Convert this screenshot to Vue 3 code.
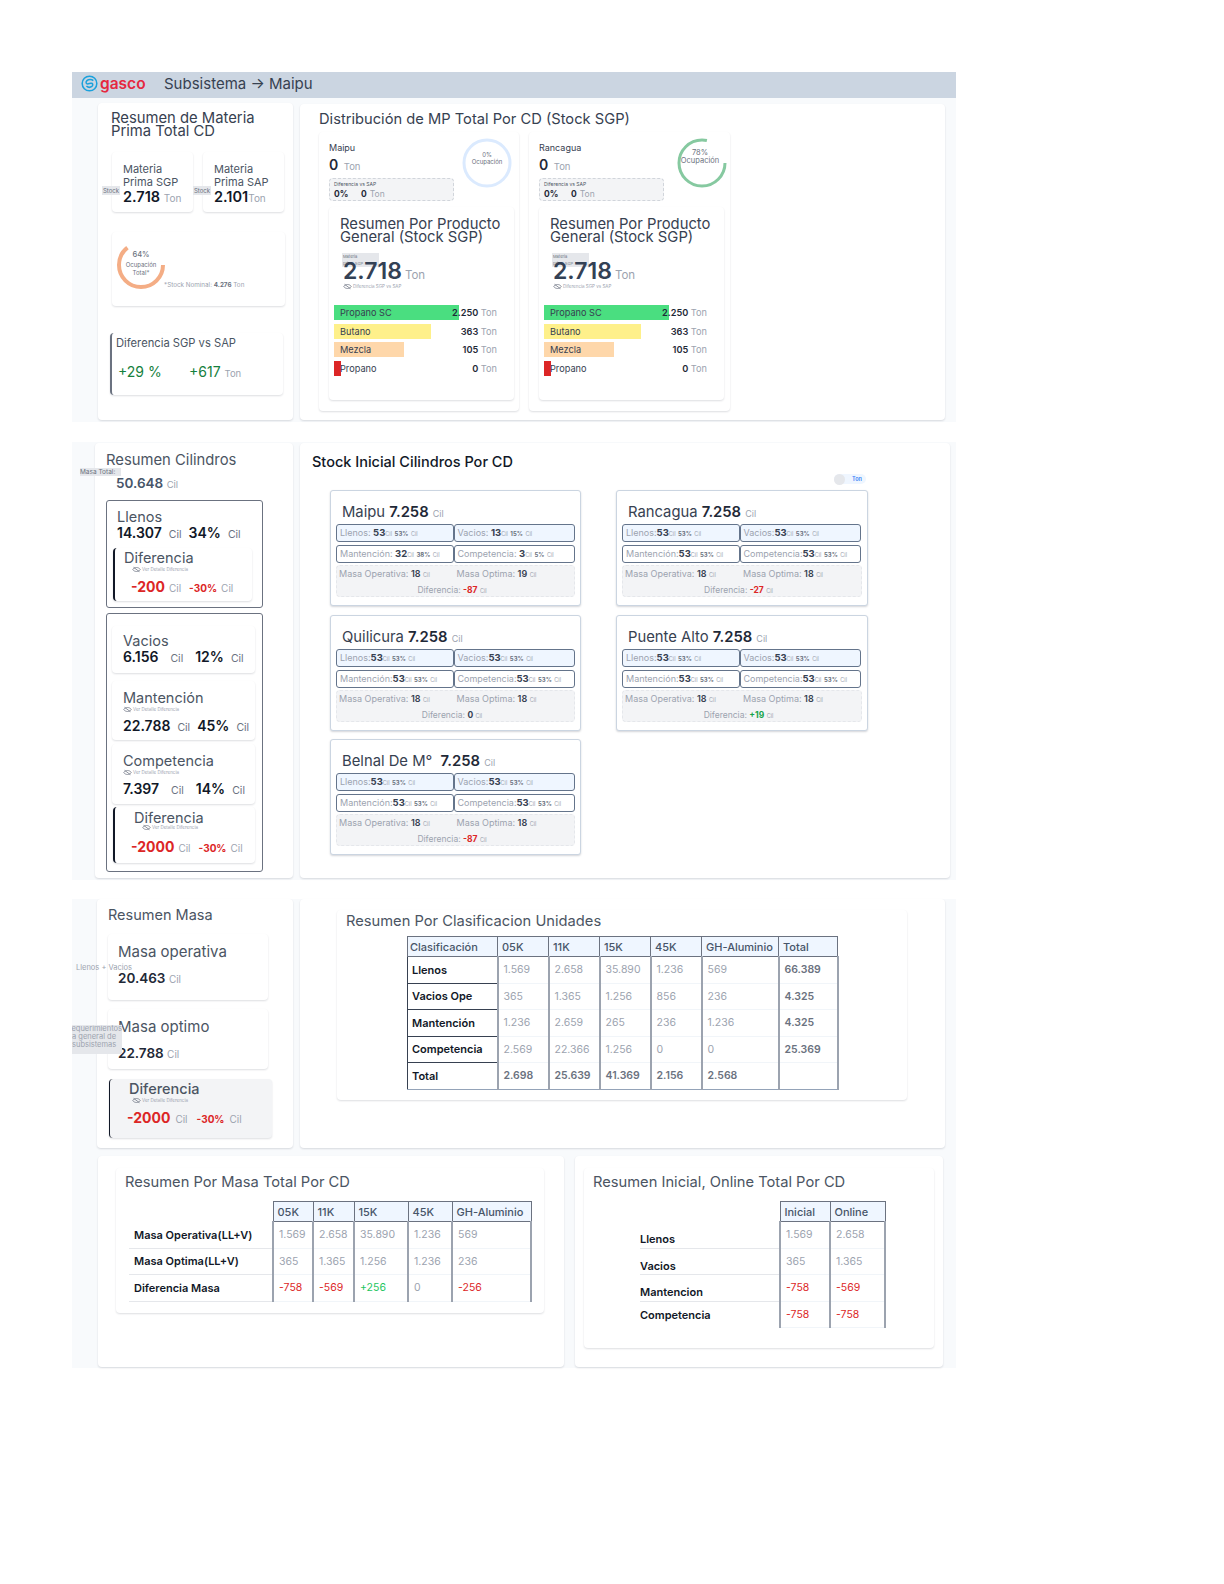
<script setup>
const products = [
  { name: 'Propano SC', value: '2.250', width: 125, color: '#4ade80' },
  { name: 'Butano', value: '363', width: 97, color: '#fef08a' },
  { name: 'Mezcla', value: '105', width: 70, color: '#fed7aa' },
  { name: 'Propano', value: '0', width: 7, color: '#dc2626' }
]
const centers = [
  { name: 'Maipu', pct: 0, wide: false, color: '#dbeafe' },
  { name: 'Rancagua', pct: 78, wide: true, color: '#86c9a0' }
]
const gaugeLen = 2 * Math.PI * 22
const stock = [
  { name: 'Maipu', cells: [['Llenos: ', '53', '53%'], ['Vacios: ', '13', '15%'], ['Mantención: ', '32', '38%'], ['Competencia: ', '3', '5%']], op: '18', opt: '19', dif: '-87', tone: 'neg' },
  { name: 'Rancagua', cells: [['Llenos:', '53', '53%'], ['Vacios:', '53', '53%'], ['Mantención:', '53', '53%'], ['Competencia:', '53', '53%']], op: '18', opt: '18', dif: '-27', tone: 'neg' },
  { name: 'Quilicura', cells: [['Llenos:', '53', '53%'], ['Vacios:', '53', '53%'], ['Mantención:', '53', '53%'], ['Competencia:', '53', '53%']], op: '18', opt: '18', dif: '0', tone: 'zero' },
  { name: 'Puente Alto', cells: [['Llenos:', '53', '53%'], ['Vacios:', '53', '53%'], ['Mantención:', '53', '53%'], ['Competencia:', '53', '53%']], op: '18', opt: '18', dif: '+19', tone: 'pos' },
  { name: 'Belnal De M° ', cells: [['Llenos:', '53', '53%'], ['Vacios:', '53', '53%'], ['Mantención:', '53', '53%'], ['Competencia:', '53', '53%']], op: '18', opt: '18', dif: '-87', tone: 'neg' }
]
const t1Cols = [90, 51, 51, 51, 51, 77, 59]
const t1Head = ['Clasificación', '05K', '11K', '15K', '45K', 'GH-Aluminio', 'Total']
const t1Rows = [
  ['Llenos', '1.569', '2.658', '35.890', '1.236', '569', '66.389'],
  ['Vacios Ope', '365', '1.365', '1.256', '856', '236', '4.325'],
  ['Mantención', '1.236', '2.659', '265', '236', '1.236', '4.325'],
  ['Competencia', '2.569', '22.366', '1.256', '0', '0', '25.369'],
  ['Total', '2.698', '25.639', '41.369', '2.156', '2.568', '']
]
const t2Cols = [144, 40, 41, 54, 44, 79]
const t2Head = ['05K', '11K', '15K', '45K', 'GH-Aluminio']
const t2Rows = [
  ['Masa Operativa(LL+V)', '1.569', '2.658', '35.890', '1.236', '569'],
  ['Masa Optima(LL+V)', '365', '1.365', '1.256', '1.236', '236'],
  ['Diferencia Masa', '-758', '-569', '+256', '0', '-256']
]
const t3Cols = [140, 50, 55]
const t3Rows = [
  ['Llenos', '1.569', '2.658'],
  ['Vacios', '365', '1.365'],
  ['Mantencion', '-758', '-569'],
  ['Competencia', '-758', '-758']
]
const toneOf = (v) => (v.startsWith('-') ? 'neg' : v.startsWith('+') ? 'pos' : '')
</script>

<template>
  <div class="page">
    <header class="topbar">
      <svg class="logo" viewBox="0 0 20 20" width="17" height="17" fill="none" stroke="#1ba1dc" stroke-width="1.8">
        <circle cx="10" cy="10" r="8.6" />
        <path d="M14.5 6.6C12.6 4.8 9 4.6 7 6.6 5 8.6 6 11 8.6 10.4l3-.6c2.4-.4 3 2 1.2 3.6-1.8 1.4-4.6 1.2-6.4-.4" />
      </svg>
      <span class="brand">gasco</span>
      <span class="crumb">Subsistema → Maipu</span>
    </header>

    <section class="band band-one">
      <div class="card mp-total">
        <h2 class="title tight">Resumen de Materia Prima Total CD</h2>
        <div class="mp-pair">
          <div class="card mp-mini">
            <div class="mp-label">Materia Prima SGP</div>
            <div class="mp-val">2.718 <small>Ton</small></div>
            <span class="tip stock-tip">Stock</span>
          </div>
          <div class="card mp-mini">
            <div class="mp-label">Materia Prima SAP</div>
            <div class="mp-val">2.101<small>Ton</small></div>
            <span class="tip stock-tip">Stock</span>
          </div>
        </div>
        <div class="card occ">
          <div class="occ-gauge">
            <svg viewBox="0 0 50 50" width="50" height="50" fill="none">
              <circle cx="25" cy="25" r="22" stroke="#f4ad85" stroke-width="4" :stroke-dasharray="`${gaugeLen * 0.64} ${gaugeLen}`" />
            </svg>
            <div class="occ-text"><b>64%</b><span>Ocupación Total*</span></div>
          </div>
          <span class="occ-note">*Stock Nominal: <b>4.276</b> Ton</span>
        </div>
        <div class="card sgp-diff">
          <div class="sgp-title">Diferencia SGP vs SAP</div>
          <div class="sgp-vals"><span>+29 %</span><span>+617 <small>Ton</small></span></div>
        </div>
      </div>

      <div class="card dist">
        <h2 class="title dist-title">Distribución de MP Total Por CD (Stock SGP)</h2>
        <div class="dist-row">
          <div v-for="c in centers" :key="c.name" class="card center">
            <div class="center-head" :class="{ wide: c.wide }">
              <div class="center-info">
                <div class="center-name">{{ c.name }}</div>
                <div class="center-val">0 <small>Ton</small></div>
                <div class="center-diff">
                  <div>Diferencia vs SAP</div>
                  <p><b>0%</b><b>0</b> <small>Ton</small></p>
                </div>
              </div>
              <div class="center-gauge">
                <svg viewBox="0 0 50 50" width="50" height="50" fill="none">
                  <circle cx="25" cy="25" r="23" stroke="#dbeafe" stroke-width="3" v-if="c.pct === 0" />
                  <circle cx="25" cy="25" r="23" :stroke="c.color" stroke-width="3" v-else :stroke-dasharray="`${2 * Math.PI * 23 * c.pct / 100} 200`" />
                </svg>
                <div class="center-gauge-text">{{ c.pct }}%<br />Ocupación</div>
              </div>
            </div>
            <div class="card product">
              <h3 class="title tight">Resumen Por Producto General (Stock SGP)</h3>
              <div class="big-wrap">
                <span class="tip big-tip">Materia<br />prima SGP</span>
                <div class="big">2.718<small>Ton</small></div>
                <div class="eye-line">
                  <svg viewBox="0 0 12 8" width="9" height="7" fill="none" stroke="#6b7280" stroke-width="1"><path d="M1 4c2-3.500 8-3.500 10 0-2 3.500-8 3.500-10 0zM2 1l8 6" /></svg>
                  Diferencia SGP vs SAP
                </div>
              </div>
              <div class="bars">
                <div v-for="p in products" :key="p.name" class="bar-row">
                  <span class="bar-fill" :style="{ width: p.width + 'px', background: p.color }"></span>
                  <span class="bar-name">{{ p.name }}</span>
                  <span class="bar-val"><b>{{ p.value }}</b> <small>Ton</small></span>
                </div>
              </div>
            </div>
          </div>
        </div>
      </div>
    </section>

    <section class="band band-two">
      <div class="card cyl">
        <h2 class="cyl-title">Resumen Cilindros</h2>
        <div class="cyl-total">
          <span class="tip total-tip">Masa Total:</span>
          50.648 <small>Cil</small>
        </div>
        <div class="group llenos">
          <div class="g-name">Llenos</div>
          <div class="g-line"><b>14.307</b><small>Cil</small><b>34%</b><small>Cil</small></div>
          <div class="card diff-box one">
            <div class="g-name">Diferencia</div>
            <div class="eye-line ind"><svg viewBox="0 0 12 8" width="9" height="7" fill="none" stroke="#6b7280" stroke-width="1"><path d="M1 4c2-3.500 8-3.500 10 0-2 3.500-8 3.500-10 0zM2 1l8 6" /></svg>Ver Detalle Diferencia</div>
            <div class="neg-line"><b>-200</b><small>Cil</small><b class="pct">-30%</b><small>Cil</small></div>
          </div>
        </div>
        <div class="group rest">
          <div class="card sub vacios">
            <div class="g-name">Vacios</div>
            <div class="g-line"><b>6.156</b><small class="wide-gap">Cil</small><b>12%</b><small>Cil</small></div>
          </div>
          <div class="card sub mant">
            <div class="g-name">Mantención</div>
            <div class="eye-line"><svg viewBox="0 0 12 8" width="9" height="7" fill="none" stroke="#6b7280" stroke-width="1"><path d="M1 4c2-3.500 8-3.500 10 0-2 3.500-8 3.500-10 0zM2 1l8 6" /></svg>Ver Detalle Diferencia</div>
            <div class="g-line"><b>22.788</b><small>Cil</small><b>45%</b><small>Cil</small></div>
          </div>
          <div class="card sub comp">
            <div class="g-name">Competencia</div>
            <div class="eye-line"><svg viewBox="0 0 12 8" width="9" height="7" fill="none" stroke="#6b7280" stroke-width="1"><path d="M1 4c2-3.500 8-3.500 10 0-2 3.500-8 3.500-10 0zM2 1l8 6" /></svg>Ver Detalle Diferencia</div>
            <div class="g-line"><b>7.397</b><small class="wide-gap">Cil</small><b>14%</b><small>Cil</small></div>
          </div>
          <div class="card diff-box two">
            <div class="g-name">Diferencia</div>
            <div class="eye-line ind"><svg viewBox="0 0 12 8" width="9" height="7" fill="none" stroke="#6b7280" stroke-width="1"><path d="M1 4c2-3.500 8-3.500 10 0-2 3.500-8 3.500-10 0zM2 1l8 6" /></svg>Ver Detalle Diferencia</div>
            <div class="neg-line"><b class="large">-2000</b><small>Cil</small><b class="pct">-30%</b><small>Cil</small></div>
          </div>
        </div>
      </div>

      <div class="card stock">
        <h2 class="stock-title">Stock Inicial Cilindros Por CD</h2>
        <div class="toggle"><i></i><span>Ton</span></div>
        <div class="stock-grid">
          <div v-for="s in stock" :key="s.name" class="stock-card">
            <div class="stock-name">{{ s.name }} <b>7.258</b> <small>Cil</small></div>
            <div class="stock-cells">
              <div v-for="(c, i) in s.cells" :key="c[0]" class="cell" :class="{ blue: i < 2 }">
                {{ c[0] }}<b>{{ c[1] }}</b><small>Cil</small> <b class="cell-pct">{{ c[2] }}</b> <small>Cil</small>
              </div>
            </div>
            <div class="mass">
              <div class="mass-row">
                <span>Masa Operativa: <b>{{ s.op }}</b> <small>Cil</small></span>
                <span>Masa Optima: <b>{{ s.opt }}</b> <small>Cil</small></span>
              </div>
              <div class="mass-dif">Diferencia: <b :class="s.tone">{{ s.dif }}</b> <small>Cil</small></div>
            </div>
          </div>
        </div>
      </div>
    </section>

    <section class="band band-three">
      <div class="three-top">
        <div class="card masa">
          <h2 class="masa-title">Resumen Masa</h2>
          <div class="card masa-card op">
            <div class="masa-name">Masa operativa</div>
            <span class="tip-plain">Llenos + Vacios</span>
            <div class="masa-val">20.463 <small>Cil</small></div>
          </div>
          <div class="card masa-card opt">
            <div class="masa-name">Masa optimo</div>
            <span class="tip req-tip">Requerimientos<br />a general de<br />subsistemas</span>
            <div class="masa-val">22.788 <small>Cil</small></div>
          </div>
          <div class="masa-diff">
            <div class="g-name">Diferencia</div>
            <div class="eye-line"><svg viewBox="0 0 12 8" width="9" height="7" fill="none" stroke="#6b7280" stroke-width="1"><path d="M1 4c2-3.500 8-3.500 10 0-2 3.500-8 3.500-10 0zM2 1l8 6" /></svg>Ver Detalle Diferencia</div>
            <div class="neg-line"><b>-2000</b><small>Cil</small><b class="pct">-30%</b><small>Cil</small></div>
          </div>
        </div>
        <div class="card units">
          <div class="card units-inner">
            <h2 class="tbl-title">Resumen Por Clasificacion Unidades</h2>
            <table class="grid t1">
              <colgroup><col v-for="(w, i) in t1Cols" :key="i" :style="{ width: w + 'px' }" /></colgroup>
              <thead><tr><th v-for="h in t1Head" :key="h">{{ h }}</th></tr></thead>
              <tbody>
                <tr v-for="(r, ri) in t1Rows" :key="r[0]" :class="{ last: ri === 4 }">
                  <td v-for="(v, i) in r" :key="i" :class="{ label: i === 0, sum: i === 6 || ri === 4 }">{{ v }}</td>
                </tr>
              </tbody>
            </table>
          </div>
        </div>
      </div>
      <div class="three-bottom">
        <div class="card panel left-panel">
          <div class="card tbl-card masa-total">
            <h2 class="tbl-title">Resumen Por Masa Total Por CD</h2>
            <table class="grid t2">
              <colgroup><col v-for="(w, i) in t2Cols" :key="i" :style="{ width: w + 'px' }" /></colgroup>
              <thead><tr><th class="blank"></th><th v-for="h in t2Head" :key="h">{{ h }}</th></tr></thead>
              <tbody>
                <tr v-for="r in t2Rows" :key="r[0]">
                  <td v-for="(v, i) in r" :key="i" :class="[i === 0 ? 'label' : toneOf(v)]">{{ v }}</td>
                </tr>
              </tbody>
            </table>
          </div>
        </div>
        <div class="card panel right-panel">
          <div class="card tbl-card online">
            <h2 class="tbl-title">Resumen Inicial, Online Total Por CD</h2>
            <table class="grid t3">
              <colgroup><col v-for="(w, i) in t3Cols" :key="i" :style="{ width: w + 'px' }" /></colgroup>
              <thead><tr><th class="blank"></th><th>Inicial</th><th>Online</th></tr></thead>
              <tbody>
                <tr v-for="r in t3Rows" :key="r[0]">
                  <td v-for="(v, i) in r" :key="i" :class="[i === 0 ? 'label' : toneOf(v)]">{{ v }}</td>
                </tr>
              </tbody>
            </table>
          </div>
        </div>
      </div>
    </section>
  </div>
</template>

<style>
html, body { background: #fff; }
</style>

<style scoped>
.page { width: 884px; margin-left: 72px; padding-top: 72px; padding-bottom: 217px; font-family: Inter, "Liberation Sans", sans-serif; color: #374151; }
h2, h3, p { margin: 0; font-weight: 400; }
small { font-weight: 400; color: #9ca3af; }
.card { background: #fff; border-radius: 4px; box-shadow: 0 1px 2px rgba(15, 23, 42, .14); box-sizing: border-box; }
.topbar { height: 26px; background: #cbd5e1; display: flex; align-items: center; padding: 0 0 3px 9px; box-sizing: border-box; }
.brand { margin-left: 2px; color: #e5283f; font-size: 15.5px; font-weight: 600; width: 64px; }
.crumb { font-size: 15px; color: #374151; }
.band { background: #f8fafc; display: flex; }
.band-one { height: 324px; padding: 5px 0 0 26px; gap: 7px; box-sizing: border-box; }
.title { font-size: 14.8px; line-height: 13px; color: #374151; }
.mp-total { width: 195px; height: 317px; padding: 9px 8px 8px 13px; }
.mp-pair { display: flex; gap: 10px; margin: 14px 0 0 1px; }
.mp-mini { position: relative; flex: none; width: 81px; height: 60px; padding: 11px 11px; }
.mp-label { font-size: 11px; line-height: 13px; color: #4b5563; }
.mp-val { font-size: 14.5px; font-weight: 600; color: #111827; line-height: 16px; white-space: nowrap; }
.mp-val small { font-size: 10px; }
.tip { position: absolute; background: #e5e7eb; color: #6b7280; }
.stock-tip { left: -10px; top: 34px; font-size: 6px; padding: 1px; }
.occ { display: flex; height: 74px; margin: 20px 0 0 1px; padding: 8px 0 0 4px; }
.occ-gauge { position: relative; width: 50px; height: 50px; }
.occ-text { position: absolute; inset: 9px 3px 0; text-align: center; font-size: 6px; line-height: 7.500px; color: #6b7280; }
.occ-text b { display: block; font-size: 7.500px; font-weight: 500; line-height: 12px; }
.occ-note { font-size: 6.300px; color: #9ca3af; margin: 41px 0 0 -2px; white-space: nowrap; }
.occ-note b { color: #6b7280; }
.sgp-diff { width: 173px; height: 62px; margin: 27px 0 0 -1px; border-left: 2px solid #6b7280; padding: 2px 4px; }
.sgp-title { font-size: 11.200px; color: #4b5563; line-height: 16px; }
.sgp-vals { display: flex; gap: 30px; margin-top: 12px; padding-left: 2px; font-size: 14px; color: #15803d; white-space: nowrap; }
.sgp-vals span:first-child { width: 41px; }
.sgp-vals small { font-size: 9.500px; }
.dist { width: 645px; height: 316px; margin-top: 1px; padding: 9px 19px; }
.dist-title { font-size: 14.700px; }
.dist-row { display: flex; gap: 10px; margin-top: 6px; }
.center { width: 200px; height: 279px; padding: 9px 5px 0 10px; }
.center + .center { width: 201px; }
.center-head { display: flex; height: 66px; }
.center-info { width: 125px; flex: none; }
.center-name { font-size: 9px; color: #374151; line-height: 14px; }
.center-val { font-size: 14px; font-weight: 600; color: #1f2937; line-height: 21px; margin-top: -1px; }
.center-val small { font-size: 9.500px; margin-left: 2px; }
.center-diff { height: 23px; border: 1px dashed #d1d5db; border-radius: 4px; background: #f3f4f6; box-sizing: border-box; margin-top: 1px; padding: 1px 4px; font-size: 5px; line-height: 8px; color: #4b5563; }
.center-diff p { display: flex; align-items: baseline; font-size: 8.500px; line-height: 12px; color: #1f2937; }
.center-diff p b:first-child { width: 27px; }
.center-diff p small { margin-left: 3px; font-size: 8.500px; }
.center-gauge { position: relative; width: 50px; height: 50px; margin: -3px 0 0 8px; }
.wide .center-gauge { margin-left: 13px; }
.center-gauge-text { position: absolute; inset: 14px 0 0; text-align: center; font-size: 6px; line-height: 6.500px; color: #6b7280; }
.wide .center-gauge-text { top: 11px; font-size: 7.500px; line-height: 8px; left: -4px; }
.product { width: 185px; height: 193px; padding: 11px 0 0 5px; }
.product .title { padding-left: 6px; }
.big-wrap { position: relative; height: 55px; padding: 15px 0 0 9px; box-sizing: border-box; }
.big-tip { left: 8px; top: 9px; width: 37px; height: 14px; font-size: 4px; line-height: 7px; padding-left: 1px; box-sizing: border-box; }
.big { position: relative; font-size: 23px; font-weight: 600; color: #334155; line-height: 24px; white-space: nowrap; }
.big small { font-size: 11.500px; margin-left: 3px; }
.eye-line { display: flex; align-items: center; gap: 1px; font-size: 4.500px; line-height: 7px; color: #9ca3af; }
.big-wrap .eye-line { margin-top: -4px; }
.bars { margin-top: 6px; display: flex; flex-direction: column; gap: 3.500px; }
.bar-row { position: relative; height: 15px; width: 163px; display: flex; align-items: center; justify-content: space-between; font-size: 9.200px; }
.bar-fill { position: absolute; left: 0; top: 0; height: 100%; }
.bar-name { position: relative; padding-left: 6px; color: #374151; }
.bar-val { position: relative; color: #1f2937; }
.bar-val b { font-weight: 600; }
.bar-val small { font-size: 9.200px; }
.band-two { margin-top: 20px; height: 438px; padding: 1px 0 0 23px; gap: 7px; box-sizing: border-box; }
.cyl { width: 198px; height: 435px; padding: 9px 11px; }
.cyl-title { font-size: 14.800px; line-height: 16px; color: #4b5563; }
.cyl-total { position: relative; margin: 7px 0 0 10px; font-size: 13.500px; font-weight: 600; color: #475569; line-height: 17px; }
.cyl-total small { font-size: 9.500px; }
.total-tip { left: -36px; top: -7px; width: 41px; height: 8px; font-size: 6.500px; line-height: 8px; font-weight: 400; white-space: nowrap; }
.group { width: 157px; box-sizing: border-box; border: 1px solid #6b7280; border-radius: 3px; }
.llenos { margin-top: 7px; height: 108px; padding: 9px 0 0 10px; }
.rest { margin-top: 5px; height: 259px; padding: 12px 0 0 5px; }
.g-name { font-size: 14.500px; line-height: 13px; color: #4b5563; }
.g-line { display: flex; align-items: baseline; font-size: 14px; line-height: 15px; color: #111827; gap: 7px; white-space: nowrap; margin-top: 2px; }
.g-line b { font-weight: 600; }
.g-line small { font-size: 10.500px; color: #6b7280; }
.wide-gap { margin: 0 5px; }
.diff-box { border-left: 2px solid #111827; }
.diff-box.one { width: 139px; height: 53px; margin: 6px 0 0 -4px; padding: 3px 0 0 9px; }
.diff-box.two { width: 142px; height: 56px; margin: 3px 0 0 1px; padding: 4px 0 0 19px; }
.ind { padding-left: 8px; }
.one .ind { margin-top: 2px; }
.neg-line { display: flex; align-items: baseline; gap: 5px; color: #dc2626; font-size: 14px; line-height: 17px; white-space: nowrap; margin-top: 5px; padding-left: 7px; }
.neg-line b { font-weight: 700; }
.neg-line .pct { font-size: 10px; margin-left: 3px; }
.neg-line small { font-size: 10px; margin-left: -1px; }
.two .neg-line { margin-left: -3px; padding-left: 0; margin-top: 7px; }
.sub { width: 143px; padding-left: 11px; }
.vacios { height: 47px; padding-top: 8px; }
.mant { height: 59px; margin-top: 8px; padding-top: 10px; }
.comp { height: 60px; margin-top: 4px; padding-top: 10px; }
.mant .eye-line, .comp .eye-line { margin-top: 2px; height: 7px; }
.mant .g-line, .comp .g-line { margin-top: 5px; }
.stock { width: 650px; height: 435px; position: relative; padding: 10px 12px; }
.stock-title { font-size: 14.500px; line-height: 17px; color: #111827; font-weight: 500; }
.toggle { position: absolute; left: 534px; top: 31px; display: flex; align-items: center; height: 10px; width: 32px; background: #eff6ff; border-radius: 6px; }
.toggle i { width: 11px; height: 11px; background: #e5e7eb; border-radius: 50%; }
.toggle span { margin-left: 7px; font-size: 5.500px; font-weight: 600; color: #3b82f6; }
.stock-grid { display: grid; grid-template-columns: 251px 252px; column-gap: 35px; row-gap: 8.500px; margin: 20px 0 0 18px; align-items: start; }
.stock-card { height: 116px; box-sizing: border-box; border: 1px solid #cbd5e1; border-radius: 3px; box-shadow: 0 1px 2px rgba(15, 23, 42, .18); padding: 13px 5px 0 5px; background: #fff; }
.stock-name { font-size: 14.800px; line-height: 17px; color: #374151; padding-left: 6px; white-space: pre-wrap; margin-bottom: 1px; }
.stock-name b { font-weight: 600; color: #1f2937; }
.stock-name small { font-size: 9px; }
.stock-cells { display: grid; grid-template-columns: 117.500px 121.500px; gap: 3px 0; margin-top: 2px; }
.cell { height: 18px; border: 1px solid #64748b; border-radius: 3px; box-sizing: border-box; font-size: 9px; line-height: 16px; color: #9ca3af; padding-left: 3px; white-space: nowrap; overflow: hidden; }
.cell.blue { background: #eff6ff; }
.cell b { color: #374151; font-size: 9.500px; }
.cell small { font-size: 5.500px; }
.cell .cell-pct { font-size: 6px; color: #6b7280; }
.mass { height: 32px; background: #f3f4f6; border: 1px dashed #e5e7eb; border-radius: 4px; box-sizing: border-box; margin-top: 2px; font-size: 9px; color: #9ca3af; padding: 1px 0 0 2px; }
.mass-row { display: flex; line-height: 14px; }
.mass-row span { width: 123px; white-space: nowrap; }
.mass-row b { color: #374151; font-weight: 600; }
.mass-row small, .mass-dif small { font-size: 5.500px; }
.mass-dif { text-align: center; font-size: 8.500px; line-height: 13px; margin: 2px 0 0 -9px; }
.mass-dif .neg { color: #dc2626; }
.mass-dif .pos { color: #16a34a; }
.mass-dif .zero { color: #374151; }
.band-three { margin-top: 19px; flex-direction: column; height: 469px; box-sizing: border-box; }
.three-top { display: flex; gap: 7px; padding-left: 25px; }
.masa { width: 196px; height: 249px; padding: 8px 11px; }
.masa-title { font-size: 14.500px; line-height: 16px; color: #4b5563; }
.masa-card { position: relative; width: 160px; padding: 9px 10px; }
.masa-card.op { height: 66px; margin-top: 11px; }
.masa-card.opt { height: 60px; margin-top: 9px; }
.masa-name { font-size: 15px; line-height: 17px; color: #4b5563; }
.masa-val { font-size: 13.500px; font-weight: 600; color: #1f2937; line-height: 16px; margin-top: 10px; }
.masa-val small { font-size: 10px; }
.tip-plain { position: absolute; left: -32px; top: 30px; font-size: 7.500px; line-height: 8px; color: #9ca3af; white-space: nowrap; }
.req-tip { left: -36px; top: 16px; width: 50px; height: 29px; overflow: hidden; font-size: 7.500px; line-height: 8px; white-space: nowrap; direction: rtl; text-align: left; color: #9ca3af; }
.masa-diff { width: 163px; height: 59px; margin: 10px 0 0 1px; box-sizing: border-box; background: #f3f4f6; border-left: 1px solid #111827; border-radius: 4px; padding: 3px 0 0 19px; box-shadow: 0 1px 2px rgba(15, 23, 42, .14); }
.masa-diff .g-name { font-weight: 500; }
.masa-diff .eye-line { padding-left: 3px; margin-top: 2px; }
.masa-diff .neg-line { margin: 5px 0 0 -2px; padding-left: 0; gap: 6px; }
.units { width: 645px; height: 249px; padding: 11px 37px; }
.units-inner { width: 570px; height: 190px; padding: 2px 0 0 9px; }
.tbl-title { font-size: 14.700px; line-height: 18px; color: #4b5563; }
.grid { border-collapse: collapse; table-layout: fixed; font-size: 10.500px; color: #9ca3af; }
.grid th { height: 19px; padding: 0 4px; background: #eff6ff; color: #475569; font-size: 11px; font-weight: 500; text-align: left; border: 1px solid #6b7280; white-space: nowrap; }
.grid td { height: 25.500px; padding: 0 5px; border-left: 2px solid #9ca3af; border-right: 2px solid #9ca3af; border-bottom: 1px solid #f1f5f9; white-space: nowrap; }
.grid td.label { color: #111827; font-weight: 600; font-size: 11px; }
.grid th.blank { background: transparent; border: 0; border-right: 1px solid #6b7280; }
.grid .neg { color: #dc2626; }
.grid .pos { color: #22c55e; }
.t1 { width: 430px; margin: 6px 0 0 61px; }
.t1 th:first-child { padding-left: 2px; }
.t1 td.label { border: 1px solid #374151; padding-left: 4px; }
.t1 td.sum { color: #6b7280; font-weight: 600; }
.t1 td.label.sum { color: #111827; }
.t1 .last td { border-bottom: 1px solid #94a3b8; }
.t2 td.label, .t3 td.label { border-left: 0; border-bottom: 1px solid #e5e7eb; padding-left: 5px; }
.three-bottom { display: flex; gap: 11px; margin-top: 8px; padding-left: 26px; }
.panel { height: 211px; padding-top: 12px; }
.left-panel { width: 466px; padding-left: 18px; }
.right-panel { width: 368px; padding-left: 9px; }
.tbl-card { padding: 5px 0 0 9px; }
.masa-total { width: 428px; height: 145px; }
.online { width: 350px; height: 180px; }
.t2 { width: 402px; margin: 10px 0 0 4px; }
.t3 { width: 245px; margin: 10px 0 0 47px; }
.t3 td.label { padding: 9px 0 0; height: 16px; }
.t3 tr:last-child td.label { padding-top: 0; border-bottom: 0; }
</style>
